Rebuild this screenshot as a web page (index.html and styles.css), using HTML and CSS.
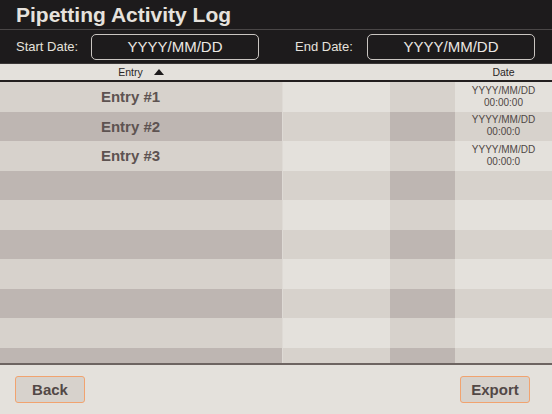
FILE: index.html
```html
<!DOCTYPE html>
<html lang="en">
  <head>
    <meta charset="UTF-8" />
    <meta name="viewport" content="width=device-width, initial-scale=1.0" />
    <title>Pipetting Activity Log</title>
    <link rel="stylesheet" href="styles.css">
  </head>
  <body>
    <div class="app">
      <header class="topbar">
        <h1 class="title">Pipetting Activity Log</h1>
        <div class="filters">
          <div class="filter">
            <span class="filter-label">Start Date:</span>
            <div class="date-box">YYYY/MM/DD</div>
          </div>
          <div class="filter filter-end">
            <span class="filter-label">End Date:</span>
            <div class="date-box">YYYY/MM/DD</div>
          </div>
        </div>
      </header>

      <div class="log-table">
        <div class="log-head">
          <div class="head-cell">Entry <span class="sort-arrow"></span></div>
          <div class="head-cell"></div>
          <div class="head-cell"></div>
          <div class="head-cell">Date</div>
        </div>
        <div class="log-body">
          <div class="log-row">
            <div class="cell cell-entry">Entry #1</div>
            <div class="cell"></div>
            <div class="cell"></div>
            <div class="cell cell-date">YYYY/MM/DD<br />00:00:00</div>
          </div>
          <div class="log-row">
            <div class="cell cell-entry">Entry #2</div>
            <div class="cell"></div>
            <div class="cell"></div>
            <div class="cell cell-date">YYYY/MM/DD<br />00:00:0</div>
          </div>
          <div class="log-row">
            <div class="cell cell-entry">Entry #3</div>
            <div class="cell"></div>
            <div class="cell"></div>
            <div class="cell cell-date">YYYY/MM/DD<br />00:00:0</div>
          </div>
          <div class="log-row"><div class="cell"></div><div class="cell"></div><div class="cell"></div><div class="cell"></div></div>
          <div class="log-row"><div class="cell"></div><div class="cell"></div><div class="cell"></div><div class="cell"></div></div>
          <div class="log-row"><div class="cell"></div><div class="cell"></div><div class="cell"></div><div class="cell"></div></div>
          <div class="log-row"><div class="cell"></div><div class="cell"></div><div class="cell"></div><div class="cell"></div></div>
          <div class="log-row"><div class="cell"></div><div class="cell"></div><div class="cell"></div><div class="cell"></div></div>
          <div class="log-row"><div class="cell"></div><div class="cell"></div><div class="cell"></div><div class="cell"></div></div>
          <div class="log-row"><div class="cell"></div><div class="cell"></div><div class="cell"></div><div class="cell"></div></div>
        </div>
      </div>

      <footer class="bottombar">
        <button class="btn">Back</button>
        <button class="btn">Export</button>
      </footer>
    </div>
  </body>
</html>
```

FILE: styles.css
```css
body {
  margin: 0;
  padding: 0;
  font-family: "Liberation Sans", Arial, sans-serif;
  background: #e4e1dc;
}
.app {
  width: 552px;
  height: 414px;
  display: flex;
  flex-direction: column;
  overflow: hidden;
}
.topbar {
  background: #1d1b1c;
  height: 63px;
  border-bottom: 1px solid #3a3737;
}
.title {
  margin: 0;
  height: 29px;
  padding-left: 16px;
  font-size: 21px;
  font-weight: bold;
  line-height: 30px;
  color: #e6e2dd;
  border-bottom: 1px solid #4a4747;
}
.filters {
  display: grid;
  grid-template-columns: 276px 276px;
  height: 33px;
  align-items: center;
}
.filter {
  display: flex;
  align-items: center;
  justify-content: space-between;
  padding: 0 17px 0 16px;
}
.filter-end {
  padding-left: 19px;
}
.filter-label {
  font-size: 13px;
  color: #e6e2dd;
}
.date-box {
  box-sizing: border-box;
  width: 168px;
  height: 26px;
  border: 1.5px solid #c9c5c1;
  border-radius: 5px;
  text-align: center;
  font-size: 15px;
  line-height: 23px;
  color: #ebe7e2;
}
.log-table {
  flex: 1;
  display: flex;
  flex-direction: column;
  overflow: hidden;
}
.log-head {
  display: grid;
  grid-template-columns: 282px 108px 65px 1fr;
  height: 16px;
  background: #e4e1dc;
  border-bottom: 2px solid #231f1f;
}
.head-cell {
  display: flex;
  align-items: center;
  justify-content: center;
  font-size: 10.5px;
  color: #2a2626;
}
.sort-arrow {
  display: inline-block;
  margin-left: 11px;
  width: 0;
  height: 0;
  border-left: 5px solid transparent;
  border-right: 5px solid transparent;
  border-bottom: 6px solid #1d1b1c;
}
.log-body {
  flex: 1;
  overflow: hidden;
}
.log-row {
  display: grid;
  grid-template-columns: 282px 108px 65px 1fr;
  height: 29.5px;
}
.cell {
  display: flex;
  align-items: center;
  justify-content: center;
}
.log-row:nth-child(odd) .cell:nth-child(odd) {
  background: #d7d2cc;
}
.log-row:nth-child(odd) .cell:nth-child(even) {
  background: #e4e1dc;
}
.log-row:nth-child(even) .cell:nth-child(odd) {
  background: #beb6b2;
}
.log-row:nth-child(even) .cell:nth-child(even) {
  background: #d7d2cc;
}
.log-row .cell:nth-child(2) {
  border-left: 1px solid #dedad5;
}
.cell-entry {
  padding-right: 21px;
  font-size: 15px;
  font-weight: bold;
  color: #5d5351;
}
.cell-date {
  text-align: center;
  font-size: 10px;
  line-height: 12px;
  color: #4f4745;
}
.bottombar {
  height: 49px;
  border-top: 2px solid #6d6461;
  background: #e4e1dc;
  display: flex;
  align-items: center;
  justify-content: space-between;
  padding: 0 22px 0 15px;
}
.btn {
  width: 70px;
  height: 27px;
  background: #d7d2cc;
  border: 1.5px solid #f1a36f;
  border-radius: 3px;
  font-family: "Liberation Sans", Arial, sans-serif;
  font-size: 15px;
  font-weight: bold;
  color: #524846;
  cursor: pointer;
}
```
